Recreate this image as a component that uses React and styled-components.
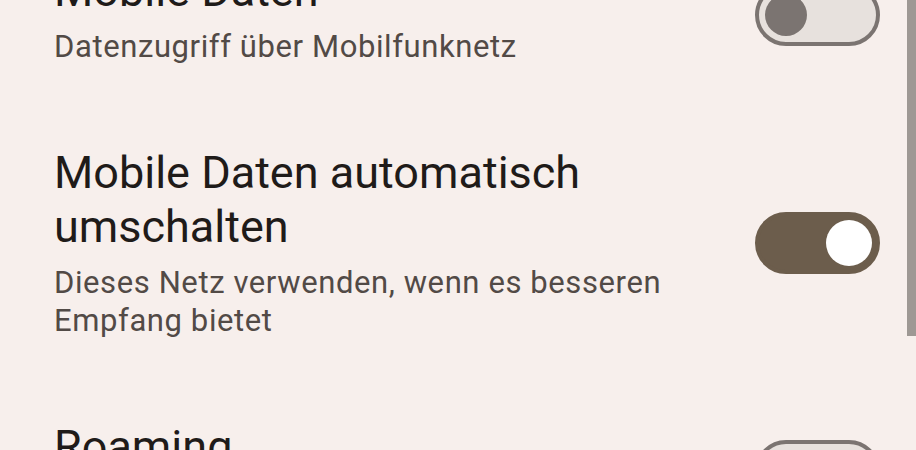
import React, { useState } from "react";
import styled, { createGlobalStyle } from "styled-components";

const Global = createGlobalStyle`
  html, body {
    margin: 0;
    padding: 0;
    background: #f7efec;
    overflow: hidden;
  }
  body {
    font-family: Roboto, "Noto Sans", sans-serif;
  }
`;

const Screen = styled.div`
  position: relative;
  width: 916px;
  height: 450px;
  overflow: hidden;
  background: #f7efec;
`;

const List = styled.div`
  display: flex;
  flex-direction: column;
  margin-top: -76px;
`;

const Row = styled.div`
  display: flex;
  align-items: center;
  gap: 40px;
  padding: 40px 36px 40px 54px;
`;

const TextCol = styled.div`
  flex: 1;
  display: flex;
  flex-direction: column;
  gap: 10px;
`;

const Title = styled.div`
  font-size: 45px;
  line-height: 54px;
  color: #1f1b19;
`;

const Sub = styled.div`
  font-size: 31px;
  line-height: 38px;
  letter-spacing: 0.6px;
  color: #524a46;
`;

const Track = styled.button`
  flex: none;
  box-sizing: border-box;
  width: 125px;
  height: 62px;
  border-radius: 31px;
  padding: 0;
  cursor: pointer;
  display: flex;
  align-items: center;
  border: 4px solid ${({ $on }) => ($on ? "#6c5d4c" : "#7b7471")};
  background: ${({ $on }) => ($on ? "#6c5d4c" : "#e7e1dd")};
  justify-content: ${({ $on }) => ($on ? "flex-end" : "flex-start")};
`;

const Thumb = styled.span`
  display: block;
  border-radius: 50%;
  width: ${({ $on }) => ($on ? "46px" : "42px")};
  height: ${({ $on }) => ($on ? "46px" : "42px")};
  margin: 0 ${({ $on }) => ($on ? "4px" : "6px")};
  background: ${({ $on }) => ($on ? "#ffffff" : "#7b7471")};
`;

const Scrollbar = styled.div`
  position: absolute;
  top: 0;
  right: 0;
  width: 9px;
  height: 336px;
  background: #9e9894;
`;

const Toggle = ({ initial }) => {
  const [on, setOn] = useState(initial);
  return (
    <Track $on={on} onClick={() => setOn(!on)}>
      <Thumb $on={on} />
    </Track>
  );
};

const items = [
  { title: "Mobile Daten", sub: "Datenzugriff über Mobilfunknetz", on: false },
  {
    title: "Mobile Daten automatisch umschalten",
    sub: "Dieses Netz verwenden, wenn es besseren Empfang bietet",
    on: true,
  },
  { title: "Roaming", sub: "Daten-Roaming aktivieren", on: false },
];

export default function App() {
  return (
    <Screen>
      <Global />
      <List>
        {items.map((it) => (
          <Row key={it.title}>
            <TextCol>
              <Title>{it.title}</Title>
              <Sub>{it.sub}</Sub>
            </TextCol>
            <Toggle initial={it.on} />
          </Row>
        ))}
      </List>
      <Scrollbar />
    </Screen>
  );
}
